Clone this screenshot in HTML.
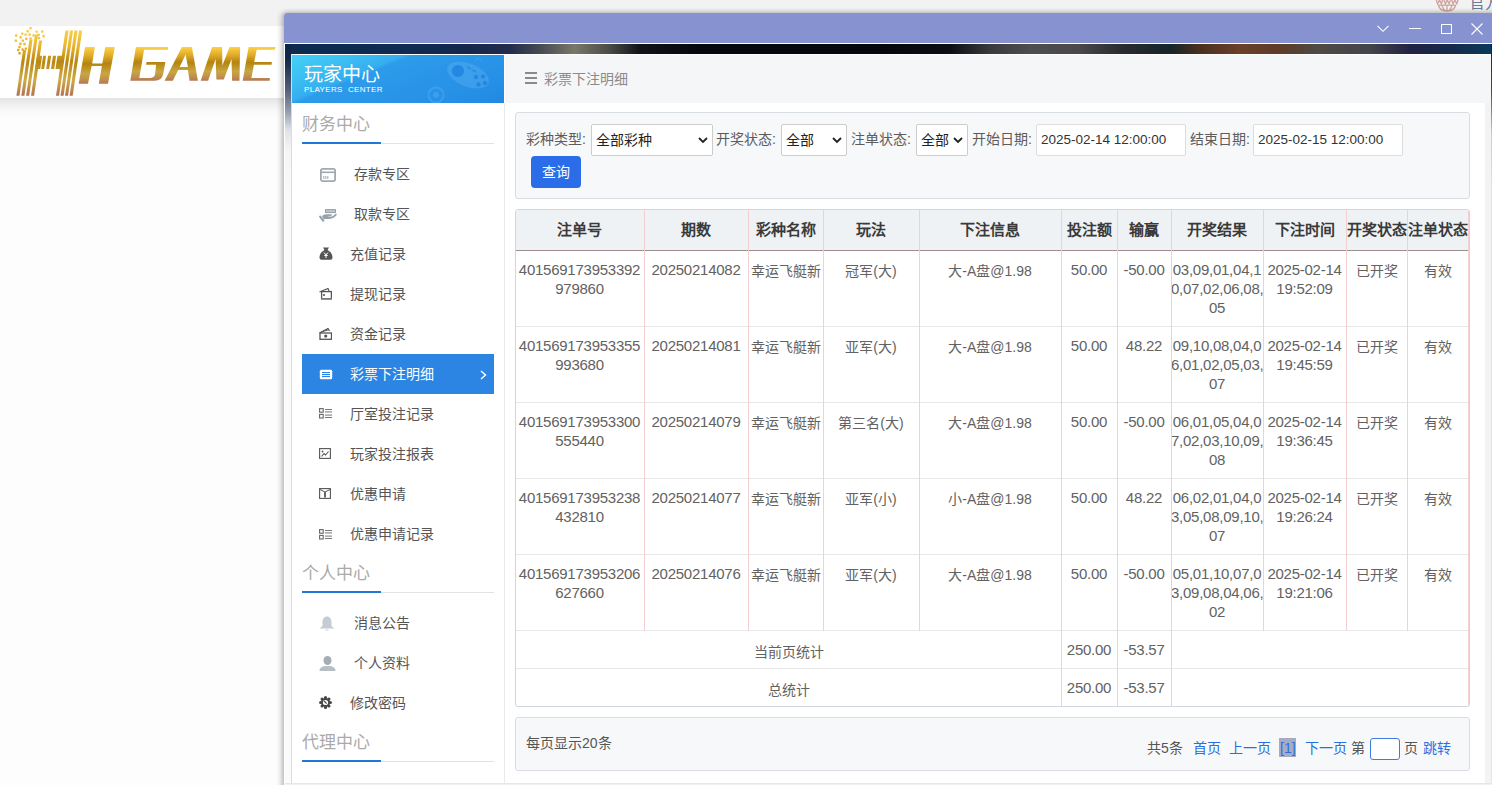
<!DOCTYPE html><html lang="zh-CN"><head><meta charset="utf-8"><style>
*{margin:0;padding:0;box-sizing:border-box}
html,body{width:1492px;height:785px;overflow:hidden}
body{font-family:"Liberation Sans",sans-serif;background:#fdfdfd;position:relative;color:#555}
.a{position:absolute}
.nw{white-space:nowrap}
#topbar{left:0;top:0;width:1492px;height:26px;background:#f2f2f2}
#hdr{left:0;top:26px;width:1492px;height:72px;background:#fff}
#hsh{left:0;top:98px;width:1492px;height:22px;background:linear-gradient(180deg,#e3e3e3 0px,#ededed 5px,#f6f6f6 11px,#fbfbfb 16px,#fdfdfd 22px)}
#win{left:284px;top:13px;width:1220px;height:790px;box-shadow:-3px 0 5px rgba(0,0,0,.21),0 -2px 4px rgba(0,0,0,.11);border-top-left-radius:3px;background:#fff}
#title{left:0;top:0;width:1220px;height:30px;background:#8792d0;border-top-left-radius:3px}
#strip{left:1px;top:31px;width:1207px;height:10px;background:linear-gradient(90deg,#0b2a4e 0.0%,#0e2c52 9.5%,#14284c 15.3%,#242c4c 18.6%,#464a52 21.1%,#7a7868 24.0%,#4a4a48 26.9%,#101418 29.4%,#05080d 34.4%,#05070c 49.6%,#0c0e14 55.1%,#3a3a3c 58.4%,#4e4e4e 61.7%,#4a4848 65.9%,#2a2c30 69.2%,#152528 73.3%,#4a3020 75.8%,#6a4028 79.1%,#5e3c28 82.4%,#4e4a44 85.7%,#44444a 89.9%,#222244 93.2%,#162a4a 96.5%,#0a3a5a 100.0%)}
#lstrip{left:1px;top:31px;width:6px;height:740px;background:linear-gradient(180deg,#0d2340 0px,#13284a 16px,#55607a 46px,#8e98aa 66px,#dfe2e8 86px,#f4f5f6 106px,#fafafa 160px,#fbfbfb 740px)}
#side{left:7px;top:41px;width:213px;height:729px;background:#fff;border-left:1px solid #dcdcdc}
#shead{left:0px;top:1px;width:212px;height:48px;background:linear-gradient(158deg,#44d0f6 0%,#3cbef2 20%,#34aef0 34%,#2c9ce9 37%,#2a96e8 55%,#2690e6 80%,#2188e2 100%);overflow:hidden}
.sec{left:11px;width:192px;height:40px}
.sec .t{position:absolute;left:0;top:0;font-size:17px;color:#aaa;line-height:20px}
.sec .ul{position:absolute;left:0;top:0;width:192px;height:1px;background:#e4e4e4}
.sec .ub{position:absolute;left:0;width:79px;height:2px;background:#1f78d8}
.mi{left:10px;width:192px;height:40px;font-size:14px;color:#555;line-height:40px}
.mi.act{background:#2c85e3;color:#fff}
.mi svg{position:absolute}
.mi .tx{position:absolute;top:0}
#main{left:220px;top:41px;width:1000px;height:729px;background:#fff}
#crumb{left:1px;top:1px;width:986px;height:48px;background:#f5f6f8}
#vline{left:0;top:49px;width:1px;height:680px;background:#e6ebf0}
#rgray{left:981px;top:49px;width:6px;height:680px;background:#f3f3f3}
#redge{left:1207px;top:31px;width:2px;height:760px;background:linear-gradient(180deg,#0b2444 0px,#3e4a66 47px,#c8ccd4 90px,#e0e0e0 140px,#e6e6e6 760px)}
#wbot{left:1px;top:770px;width:1219px;height:30px;background:#f0f0f0;border-top:1px solid #e6e6e6}
.box{border:1px solid #d9dde3;border-radius:3px;background:#f7f8fa}
.lbl{font-size:14px;color:#5c5c5c;line-height:16px}
.sel{background:#fff;border:1px solid #ccc;border-radius:2px;font-size:14px;color:#222;line-height:18px}
.inp{background:#fff;border:1px solid #ddd;border-radius:2px;font-size:13.5px;color:#333;line-height:16px}
.btn{background:#2b6de8;border-radius:4px;color:#fff;font-size:14px;line-height:18px;text-align:center}
#tbl{left:515px;top:209px;width:955px;height:498px;border:1px solid #cfd6dd;border-radius:3px;background:#fff;overflow:hidden}
.th{position:absolute;top:0;height:40px;background:#eff2f5;font-weight:bold;font-size:15px;color:#3a3a3a;text-align:center;line-height:40px}
.vl{position:absolute;width:1px;background:#f4cfd2}
.hl{position:absolute;height:1px;background:#e8e8e8}
.td{position:absolute;font-size:14px;color:#626262;text-align:center;line-height:19px;word-break:break-all}
.num{font-size:15px;letter-spacing:-0.25px}
.pg{font-size:14px;line-height:18px;color:#555}
.lk{color:#2a6fe0}
</style></head><body><div id="topbar" class="a"></div>
<div id="hdr" class="a"></div><div id="hsh" class="a"></div>
<svg class="a" style="left:0;top:26px" width="284" height="72" viewBox="0 26 284 72">
<defs>
<linearGradient id="g2" x1="0" y1="30" x2="0" y2="96" gradientUnits="userSpaceOnUse">
<stop offset="0" stop-color="#fbd045"/><stop offset="0.25" stop-color="#e8b430"/><stop offset="0.48" stop-color="#b8870f"/><stop offset="0.75" stop-color="#cfab48"/><stop offset="0.9" stop-color="#bf8a4c"/><stop offset="1" stop-color="#b27058"/></linearGradient>
<linearGradient id="g3" x1="0" y1="47" x2="0" y2="81" gradientUnits="userSpaceOnUse">
<stop offset="0" stop-color="#fdd244"/><stop offset="0.22" stop-color="#e2ae2c"/><stop offset="0.45" stop-color="#b5840d"/><stop offset="0.72" stop-color="#c8a644"/><stop offset="0.88" stop-color="#c08f4c"/><stop offset="1" stop-color="#b47554"/></linearGradient>
<linearGradient id="g4" x1="0" y1="47" x2="0" y2="84" gradientUnits="userSpaceOnUse">
<stop offset="0" stop-color="#fdd244"/><stop offset="0.22" stop-color="#e2ae2c"/><stop offset="0.45" stop-color="#b5840d"/><stop offset="0.72" stop-color="#c8a644"/><stop offset="0.88" stop-color="#c08f4c"/><stop offset="1" stop-color="#b47554"/></linearGradient>
</defs>
<g fill="url(#g2)">
<polygon points="16.40,95.7 19.50,95.7 26.13,50.00 23.03,50.00"/><polygon points="21.30,95.7 24.40,95.7 32.55,39.50 29.45,39.50"/><polygon points="26.10,95.7 29.20,95.7 38.07,34.50 34.97,34.50"/><polygon points="31.00,95.7 34.10,95.7 42.10,40.50 39.00,40.50"/><polygon points="56.00,95.7 59.10,95.7 68.54,30.60 65.44,30.60"/><polygon points="60.50,95.7 63.60,95.7 73.04,30.60 69.94,30.60"/><polygon points="65.00,95.7 68.10,95.7 77.54,30.60 74.44,30.60"/><polygon points="69.60,95.7 72.70,95.7 82.14,30.60 79.04,30.60"/><polygon points="35.20,69.1 40.20,69.1 42.13,55.8 37.13,55.8"/><polygon points="41.20,69.1 44.20,69.1 46.13,55.8 43.13,55.8"/><polygon points="46.20,69.1 49.20,69.1 51.13,55.8 48.13,55.8"/><polygon points="51.00,69.1 54.20,69.1 56.13,55.8 52.93,55.8"/><polygon points="55.50,69.1 61.00,69.1 62.93,55.8 57.43,55.8"/><rect x="29.4" y="27.0" width="2.4" height="2.4" rx="0.6"/><rect x="26.4" y="30.0" width="2.4" height="2.4" rx="0.6"/><rect x="35.4" y="30.4" width="2.4" height="2.4" rx="0.6"/><rect x="41.0" y="30.3" width="2.4" height="2.4" rx="0.6"/><rect x="21.1" y="32.4" width="2.4" height="2.4" rx="0.6"/><rect x="24.4" y="33.4" width="2.4" height="2.4" rx="0.6"/><rect x="28.4" y="33.3" width="2.4" height="2.4" rx="0.6"/><rect x="32.4" y="34.3" width="2.4" height="2.4" rx="0.6"/><rect x="37.4" y="33.6" width="2.4" height="2.4" rx="0.6"/><rect x="42.4" y="35.0" width="2.4" height="2.4" rx="0.6"/><rect x="15.0" y="34.3" width="2.4" height="2.4" rx="0.6"/><rect x="19.4" y="36.1" width="2.4" height="2.4" rx="0.6"/><rect x="25.1" y="37.6" width="2.4" height="2.4" rx="0.6"/><rect x="29.3" y="37.3" width="2.4" height="2.4" rx="0.6"/><rect x="37.8" y="36.8" width="2.4" height="2.4" rx="0.6"/><rect x="14.6" y="39.4" width="2.4" height="2.4" rx="0.6"/><rect x="21.6" y="39.4" width="2.4" height="2.4" rx="0.6"/><rect x="19.3" y="42.6" width="2.4" height="2.4" rx="0.6"/><rect x="23.3" y="42.8" width="2.4" height="2.4" rx="0.6"/><rect x="18.3" y="45.8" width="2.4" height="2.4" rx="0.6"/><rect x="21.4" y="48.3" width="2.4" height="2.4" rx="0.6"/><rect x="24.6" y="47.4" width="2.4" height="2.4" rx="0.6"/><rect x="17.0" y="48.8" width="2.4" height="2.4" rx="0.6"/><rect x="18.4" y="52.0" width="2.4" height="2.4" rx="0.6"/></g><g fill="url(#g4)"><polygon points="78.7,83.7 88.0,83.7 91.6,66 101.9,66 98.8,83.7 108,83.7 114.8,47 105.3,47 102.3,63.6 92.2,63.6 94.9,47 85.1,47"/></g><g fill="url(#g3)"><path d="M135.9,47 L168.2,47 L167.9,49.8 L144.1,49.8 L139.3,77.9 L150.5,77.9 Q154.6,77.9 155.2,73.5 L156.1,64.7 L146,64.7 L146.6,61.9 L165.4,61.9 L163.3,73.5 Q162.2,80.7 154.4,80.7 L130.3,80.7 Z"/><path d="M164.6,80.7 L181.9,47 L191.9,47 L197.9,80.7 L189.6,80.7 L187.9,69.9 L178.2,69.9 L172.8,80.7 Z M185.6,54.5 L179.7,67.1 L187.9,67.1 Z" fill-rule="evenodd"/><polygon points="200.7,80.7 212.1,47 222.1,47 222.4,65.4 229.5,47 240.1,47 239.5,80.7 232.1,80.7 231.5,59.1 223.8,79.6 216.4,79.6 215.6,59.1 208.1,80.7"/><polygon points="248.6,47 275.5,47 274.7,49.8 256.7,49.8 254.2,61.9 271.9,61.9 271.6,64.7 253.9,64.7 251.4,77.9 269.9,77.9 269.6,80.7 242.7,80.7"/></g></svg>
<svg class="a" style="left:1430px;top:0" width="34" height="13" viewBox="1430 0 34 13"><g fill="none" stroke="#cfa29e" stroke-width="1.3"><path d="M1435.6,-2 L1437.6,3.8 L1439.5,0 L1441.4,3.8 L1443.3,-2"/><path d="M1443.3,-2 L1445.3,3.8 L1447.2,0 L1449.1,3.8 L1451,-2"/><path d="M1451,-2 L1453,3.8 L1454.9,0 L1456.8,3.8 L1458.6,-2"/><path d="M1438,5.2 H1456"/><path d="M1438.3,5.2 Q1440,11 1447,11 Q1454,11 1455.7,5.2"/><path d="M1447,5.2 V11"/><path d="M1442,5.2 Q1443,9 1445,10.8"/><path d="M1452,5.2 Q1451,9 1449,10.8"/></g></svg>
<div class="a nw" style="left:1469px;top:-6px;font-size:16px;color:#6b7a99;line-height:18px">官方</div>
<div id="win" class="a"><div id="title" class="a"></div><svg class="a" style="left:1093px;top:12px" width="12" height="8"><path d="M0.5 0.8 L6 6.3 L11.5 0.8" fill="none" stroke="#fff" stroke-width="1.1"/></svg><div class="a" style="left:1125px;top:15px;width:12px;height:1px;background:#fff"></div><div class="a" style="left:1157px;top:11px;width:11px;height:10px;border:1px solid #fff"></div><svg class="a" style="left:1187px;top:10px" width="12" height="12"><path d="M0.5 0.5 L11.5 11.5 M11.5 0.5 L0.5 11.5" fill="none" stroke="#fff" stroke-width="1.1"/></svg><div id="strip" class="a"></div><div id="lstrip" class="a"></div><div id="side" class="a"><div id="shead" class="a"><svg class="a" style="left:0;top:0" width="212" height="48"><g opacity="0.55"><ellipse cx="176" cy="20" rx="22" ry="11.5" transform="rotate(22 176 20)" fill="#4eaaf0"/><circle cx="144" cy="40" r="7.5" fill="none" stroke="#4eaaf0" stroke-width="2"/><circle cx="144" cy="40" r="3" fill="#4eaaf0"/><path d="M182 7 L186 3 L190 6" fill="none" stroke="#4eaaf0" stroke-width="1"/></g><g fill="#1f82e0" opacity="0.8"><circle cx="166" cy="16" r="6"/><circle cx="184" cy="22" r="2.2"/><circle cx="191" cy="21.5" r="2.2"/><circle cx="186.5" cy="29.5" r="2.2"/><circle cx="193" cy="28" r="2.2"/><rect x="175" y="12" width="4" height="1.6" transform="rotate(30 177 13)"/><rect x="180" y="15" width="4" height="1.6" transform="rotate(30 182 16)"/></g></svg><div class="a nw" style="left:12px;top:9px;font-size:19px;line-height:22px;color:#fff">玩家中心</div><div class="a nw" style="left:12px;top:30px;font-size:8px;line-height:10px;color:#fff;letter-spacing:.35px">PLAYERS &nbsp;CENTER</div></div><div class="a nw" style="left:10px;top:61px;font-size:17px;line-height:20px;color:#aaa">财务中心</div><div class="a" style="left:10px;top:89px;width:192px;height:1px;background:#e3e3e3"></div><div class="a" style="left:10px;top:88px;width:79px;height:2px;background:#1f78d8"></div><div class="a nw" style="left:10px;top:510px;font-size:17px;line-height:20px;color:#aaa">个人中心</div><div class="a" style="left:10px;top:538px;width:192px;height:1px;background:#e3e3e3"></div><div class="a" style="left:10px;top:537px;width:79px;height:2px;background:#1f78d8"></div><div class="a nw" style="left:10px;top:679px;font-size:17px;line-height:20px;color:#aaa">代理中心</div><div class="a" style="left:10px;top:707px;width:192px;height:1px;background:#e3e3e3"></div><div class="a" style="left:10px;top:706px;width:79px;height:2px;background:#1f78d8"></div><div class="a mi" style="top:100px"><div class="a" style="left:18px;top:14px;line-height:0"><svg width="16" height="14" viewBox="0 0 16 14"><rect x="0.9" y="0.9" width="14.2" height="12.2" rx="1.8" fill="none" stroke="#a0a9b2" stroke-width="1.8"/><rect x="1" y="3.5" width="14" height="1.6" fill="#a0a9b2"/><rect x="3.3" y="8" width="1" height="3" fill="#a0a9b2"/><rect x="5.3" y="8" width="1" height="3" fill="#a0a9b2"/><rect x="7.3" y="8" width="1" height="3" fill="#a0a9b2"/></svg></div><div class="tx nw" style="left:52px">存款专区</div></div><div class="a mi" style="top:140px"><div class="a" style="left:17px;top:15px;line-height:0"><svg width="19" height="13" viewBox="0 0 19 13"><rect x="6.5" y="0.6" width="10" height="3" fill="#bcc3ca" stroke="#98a2ac" stroke-width="1"/><path d="M3,7 Q4.5,5.2 7,5.2 L12.3,5.2 Q13.6,5.6 12.6,6.7 L8.6,7.2 Q10.5,7.9 13,7.4 L17.2,4.6 Q18.3,5.2 17.4,6.4 Q14.8,9.6 10.5,9.9 L6.2,9.9 L4.8,10.6 Z" fill="#98a2ac"/><path d="M1.2,7.6 L4.2,11.6" stroke="#98a2ac" stroke-width="2.2" stroke-linecap="round"/></svg></div><div class="tx nw" style="left:52px">取款专区</div></div><div class="a mi" style="top:180px"><div class="a" style="left:17px;top:13px;line-height:0"><svg width="14" height="13" viewBox="0 0 14 13"><path d="M4 0.5 L10 0.5 L8.5 3 C12 4.5 13.5 8 13.5 10.5 C13.5 12 12.5 12.8 11 12.8 L3 12.8 C1.5 12.8 0.5 12 0.5 10.5 C0.5 8 2 4.5 5.5 3 Z" fill="#555"/><path d="M5 5.5 L7 8 L9 5.5 M7 8 V11 M5.3 8.5 H8.7" stroke="#fff" stroke-width="1" fill="none"/></svg></div><div class="tx nw" style="left:48px">充值记录</div></div><div class="a mi" style="top:220px"><div class="a" style="left:17px;top:14px;line-height:0"><svg width="13" height="12" viewBox="0 0 13 12"><path d="M0.5 4 L9 0.5 L10 3" fill="none" stroke="#555" stroke-width="1.2"/><rect x="2.6" y="3.6" width="9.8" height="7.2" fill="#fff" stroke="#555" stroke-width="1.3"/><rect x="2" y="10" width="11" height="1.5" fill="#777"/><rect x="4" y="6" width="2" height="2" fill="#777"/></svg></div><div class="tx nw" style="left:48px">提现记录</div></div><div class="a mi" style="top:260px"><div class="a" style="left:17px;top:14px;line-height:0"><svg width="13" height="12" viewBox="0 0 13 12"><path d="M0.5 5 L9 0.5 L10.5 3" fill="none" stroke="#555" stroke-width="1.2"/><path d="M2 4 L9.5 1.8" stroke="#555" stroke-width="1"/><rect x="1" y="5" width="11.5" height="6.3" fill="#fff" stroke="#555" stroke-width="1.3"/><circle cx="6.7" cy="8.1" r="1.6" fill="#555"/></svg></div><div class="tx nw" style="left:48px">资金记录</div></div><div class="a mi act" style="top:300px"><div class="a" style="left:17px;top:15px;line-height:0"><svg width="14" height="11" viewBox="0 0 14 11"><rect x="0.8" y="0.8" width="12.4" height="9.4" rx="1.5" fill="#fff"/><rect x="3" y="3" width="8" height="1.1" fill="#2c85e3"/><rect x="3" y="5" width="8" height="1.1" fill="#2c85e3"/><rect x="3" y="7" width="8" height="1.1" fill="#2c85e3"/></svg></div><div class="tx nw" style="left:48px">彩票下注明细</div><svg class="a" style="left:178px;top:16px" width="7" height="10"><path d="M1 1 L5.5 5 L1 9" fill="none" stroke="#fff" stroke-width="1.4"/></svg></div><div class="a mi" style="top:340px"><div class="a" style="left:17px;top:14px;line-height:0"><svg width="13" height="11" viewBox="0 0 13 11"><rect x="0.6" y="0.6" width="3.6" height="3.6" fill="none" stroke="#666" stroke-width="1.1"/><rect x="0.6" y="6.4" width="3.6" height="3.6" fill="none" stroke="#666" stroke-width="1.1"/><rect x="6" y="1" width="7" height="1" fill="#777"/><rect x="6" y="3.4" width="7" height="1" fill="#777"/><rect x="6" y="6.6" width="7" height="1" fill="#777"/><rect x="6" y="9" width="7" height="1" fill="#777"/></svg></div><div class="tx nw" style="left:48px">厅室投注记录</div></div><div class="a mi" style="top:380px"><div class="a" style="left:17px;top:14px;line-height:0"><svg width="12" height="11" viewBox="0 0 12 11"><rect x="0.6" y="0.6" width="10.8" height="9.8" fill="none" stroke="#555" stroke-width="1.1"/><path d="M2.5 8.5 L5 5.5 L6.5 7 L9.5 3.5" fill="none" stroke="#555" stroke-width="1.1"/><circle cx="3.5" cy="3.5" r="0.9" fill="#555"/></svg></div><div class="tx nw" style="left:48px">玩家投注报表</div></div><div class="a mi" style="top:420px"><div class="a" style="left:17px;top:14px;line-height:0"><svg width="12" height="11" viewBox="0 0 12 11"><rect x="0.6" y="0.6" width="10.8" height="9.8" fill="none" stroke="#555" stroke-width="1.1"/><path d="M1 1.5 L6 4 L11 1.5" fill="none" stroke="#555" stroke-width="1"/><path d="M6 4 V9.5" stroke="#666" stroke-width="2"/></svg></div><div class="tx nw" style="left:48px">优惠申请</div></div><div class="a mi" style="top:460px"><div class="a" style="left:17px;top:15px;line-height:0"><svg width="13" height="11" viewBox="0 0 13 11"><rect x="0.6" y="0.6" width="3.6" height="3.6" fill="none" stroke="#666" stroke-width="1.1"/><rect x="0.6" y="6.4" width="3.6" height="3.6" fill="none" stroke="#666" stroke-width="1.1"/><rect x="6" y="1" width="7" height="1" fill="#777"/><rect x="6" y="3.4" width="7" height="1" fill="#777"/><rect x="6" y="6.6" width="7" height="1" fill="#777"/><rect x="6" y="9" width="7" height="1" fill="#777"/></svg></div><div class="tx nw" style="left:48px">优惠申请记录</div></div><div class="a mi" style="top:549px"><div class="a" style="left:17px;top:13px;line-height:0"><svg width="16" height="15" viewBox="0 0 16 15"><path d="M8 0.5 C11 0.5 12.5 3 12.5 6 L12.5 10 L15.5 12.5 L0.5 12.5 L3.5 10 L3.5 6 C3.5 3 5 0.5 8 0.5 Z" fill="#c6ccd3"/><rect x="6.8" y="13.5" width="2.4" height="1" fill="#c6ccd3"/></svg></div><div class="tx nw" style="left:52px">消息公告</div></div><div class="a mi" style="top:589px"><div class="a" style="left:17px;top:13px;line-height:0"><svg width="17" height="15" viewBox="0 0 17 15"><ellipse cx="8.5" cy="4.5" rx="4" ry="4.5" fill="#a3adb6"/><path d="M0.5 15 C0.5 12 3 10.5 6 10 L11 10 C14 10.5 16.5 12 16.5 15 Z" fill="#b6bec6"/></svg></div><div class="tx nw" style="left:52px">个人资料</div></div><div class="a mi" style="top:629px"><div class="a" style="left:17px;top:13px;line-height:0"><svg width="13" height="13" viewBox="0 0 13 13"><g fill="#474747"><circle cx="6.50" cy="1.60" r="1.55"/><circle cx="9.96" cy="3.04" r="1.55"/><circle cx="11.40" cy="6.50" r="1.55"/><circle cx="9.96" cy="9.96" r="1.55"/><circle cx="6.50" cy="11.40" r="1.55"/><circle cx="3.04" cy="9.96" r="1.55"/><circle cx="1.60" cy="6.50" r="1.55"/><circle cx="3.04" cy="3.04" r="1.55"/><circle cx="6.5" cy="6.5" r="4.6"/></g><circle cx="6.5" cy="6.5" r="2.6" fill="#fff"/><path d="M5.2,5 L7.6,7.6" stroke="#474747" stroke-width="1.2"/></svg></div><div class="tx nw" style="left:48px">修改密码</div></div></div><div id="main" class="a"><div id="crumb" class="a"></div><div id="vline" class="a"></div><div id="rgray" class="a"></div><div class="a" style="left:21px;top:18px;width:12px;height:2px;background:#8a8a8a"></div><div class="a" style="left:21px;top:23px;width:12px;height:2px;background:#8a8a8a"></div><div class="a" style="left:21px;top:28px;width:12px;height:2px;background:#8a8a8a"></div><div class="a nw" style="left:40px;top:16px;font-size:14px;line-height:18px;color:#8a8a8a">彩票下注明细</div><div class="a box" style="left:11px;top:58px;width:955px;height:87px"></div><div class="a lbl nw" style="left:22px;top:77px">彩种类型:</div><div class="a sel nw" style="left:87px;top:70px;width:122px;height:32px;padding:6px 0 0 4px">全部彩种<svg class="a" style="left:106px;top:12px" width="10" height="7"><path d="M1 1 L5 5 L9 1" fill="none" stroke="#222" stroke-width="1.8"/></svg></div><div class="a lbl nw" style="left:212px;top:77px">开奖状态:</div><div class="a sel nw" style="left:277px;top:70px;width:66px;height:32px;padding:6px 0 0 4px">全部<svg class="a" style="left:50px;top:12px" width="10" height="7"><path d="M1 1 L5 5 L9 1" fill="none" stroke="#222" stroke-width="1.8"/></svg></div><div class="a lbl nw" style="left:347px;top:77px">注单状态:</div><div class="a sel nw" style="left:412px;top:70px;width:52px;height:32px;padding:6px 0 0 4px">全部<svg class="a" style="left:36px;top:12px" width="10" height="7"><path d="M1 1 L5 5 L9 1" fill="none" stroke="#222" stroke-width="1.8"/></svg></div><div class="a lbl nw" style="left:468px;top:77px">开始日期:</div><div class="a inp nw" style="left:532px;top:70px;width:150px;height:32px;padding:7px 0 0 4px">2025-02-14 12:00:00</div><div class="a lbl nw" style="left:686px;top:77px">结束日期:</div><div class="a inp nw" style="left:749px;top:70px;width:150px;height:32px;padding:7px 0 0 4px">2025-02-15 12:00:00</div><div class="a btn nw" style="left:27px;top:102px;width:50px;height:32px;padding-top:7px">查询</div></div><div id="redge" class="a"></div><div id="wbot" class="a"></div></div>
<div id="tbl" class="a"><div class="th nw" style="left:-1px;width:129px">注单号</div><div class="th nw" style="left:128px;width:104px">期数</div><div class="th nw" style="left:232px;width:75px">彩种名称</div><div class="th nw" style="left:307px;width:96px">玩法</div><div class="th nw" style="left:403px;width:142px">下注信息</div><div class="th nw" style="left:545px;width:56px">投注额</div><div class="th nw" style="left:601px;width:54px">输赢</div><div class="th nw" style="left:655px;width:92px">开奖结果</div><div class="th nw" style="left:747px;width:83px">下注时间</div><div class="th nw" style="left:830px;width:61px">开奖状态</div><div class="th nw" style="left:891px;width:62px">注单状态</div><div class="a" style="left:0;top:40px;width:955px;height:1px;background:#9c8e8e"></div><div class="td nw num" style="left:-1px;width:129px;top:50px">401569173953392<br>979860</div><div class="td nw num" style="left:128px;width:104px;top:50px">20250214082</div><div class="td nw" style="left:232px;width:75px;top:52px">幸运飞艇新</div><div class="td nw" style="left:307px;width:96px;top:52px">冠军(大)</div><div class="td nw" style="left:403px;width:142px;top:52px">大-A盘@1.98</div><div class="td nw num" style="left:545px;width:56px;top:50px">50.00</div><div class="td nw num" style="left:601px;width:54px;top:50px">-50.00</div><div class="td nw num" style="left:655px;width:92px;top:50px">03,09,01,04,1<br>0,07,02,06,08,<br>05</div><div class="td nw num" style="left:747px;width:83px;top:50px">2025-02-14<br>19:52:09</div><div class="td nw" style="left:830px;width:61px;top:52px">已开奖</div><div class="td nw" style="left:891px;width:62px;top:52px">有效</div><div class="hl" style="left:0;top:116px;width:955px"></div><div class="td nw num" style="left:-1px;width:129px;top:126px">401569173953355<br>993680</div><div class="td nw num" style="left:128px;width:104px;top:126px">20250214081</div><div class="td nw" style="left:232px;width:75px;top:128px">幸运飞艇新</div><div class="td nw" style="left:307px;width:96px;top:128px">亚军(大)</div><div class="td nw" style="left:403px;width:142px;top:128px">大-A盘@1.98</div><div class="td nw num" style="left:545px;width:56px;top:126px">50.00</div><div class="td nw num" style="left:601px;width:54px;top:126px">48.22</div><div class="td nw num" style="left:655px;width:92px;top:126px">09,10,08,04,0<br>6,01,02,05,03,<br>07</div><div class="td nw num" style="left:747px;width:83px;top:126px">2025-02-14<br>19:45:59</div><div class="td nw" style="left:830px;width:61px;top:128px">已开奖</div><div class="td nw" style="left:891px;width:62px;top:128px">有效</div><div class="hl" style="left:0;top:192px;width:955px"></div><div class="td nw num" style="left:-1px;width:129px;top:202px">401569173953300<br>555440</div><div class="td nw num" style="left:128px;width:104px;top:202px">20250214079</div><div class="td nw" style="left:232px;width:75px;top:204px">幸运飞艇新</div><div class="td nw" style="left:307px;width:96px;top:204px">第三名(大)</div><div class="td nw" style="left:403px;width:142px;top:204px">大-A盘@1.98</div><div class="td nw num" style="left:545px;width:56px;top:202px">50.00</div><div class="td nw num" style="left:601px;width:54px;top:202px">-50.00</div><div class="td nw num" style="left:655px;width:92px;top:202px">06,01,05,04,0<br>7,02,03,10,09,<br>08</div><div class="td nw num" style="left:747px;width:83px;top:202px">2025-02-14<br>19:36:45</div><div class="td nw" style="left:830px;width:61px;top:204px">已开奖</div><div class="td nw" style="left:891px;width:62px;top:204px">有效</div><div class="hl" style="left:0;top:268px;width:955px"></div><div class="td nw num" style="left:-1px;width:129px;top:278px">401569173953238<br>432810</div><div class="td nw num" style="left:128px;width:104px;top:278px">20250214077</div><div class="td nw" style="left:232px;width:75px;top:280px">幸运飞艇新</div><div class="td nw" style="left:307px;width:96px;top:280px">亚军(小)</div><div class="td nw" style="left:403px;width:142px;top:280px">小-A盘@1.98</div><div class="td nw num" style="left:545px;width:56px;top:278px">50.00</div><div class="td nw num" style="left:601px;width:54px;top:278px">48.22</div><div class="td nw num" style="left:655px;width:92px;top:278px">06,02,01,04,0<br>3,05,08,09,10,<br>07</div><div class="td nw num" style="left:747px;width:83px;top:278px">2025-02-14<br>19:26:24</div><div class="td nw" style="left:830px;width:61px;top:280px">已开奖</div><div class="td nw" style="left:891px;width:62px;top:280px">有效</div><div class="hl" style="left:0;top:344px;width:955px"></div><div class="td nw num" style="left:-1px;width:129px;top:354px">401569173953206<br>627660</div><div class="td nw num" style="left:128px;width:104px;top:354px">20250214076</div><div class="td nw" style="left:232px;width:75px;top:356px">幸运飞艇新</div><div class="td nw" style="left:307px;width:96px;top:356px">亚军(大)</div><div class="td nw" style="left:403px;width:142px;top:356px">大-A盘@1.98</div><div class="td nw num" style="left:545px;width:56px;top:354px">50.00</div><div class="td nw num" style="left:601px;width:54px;top:354px">-50.00</div><div class="td nw num" style="left:655px;width:92px;top:354px">05,01,10,07,0<br>3,09,08,04,06,<br>02</div><div class="td nw num" style="left:747px;width:83px;top:354px">2025-02-14<br>19:21:06</div><div class="td nw" style="left:830px;width:61px;top:356px">已开奖</div><div class="td nw" style="left:891px;width:62px;top:356px">有效</div><div class="hl" style="left:0;top:420px;width:955px"></div><div class="td nw" style="left:0;width:545px;top:433px">当前页统计</div><div class="td nw num" style="left:545px;width:56px;top:430px">250.00</div><div class="td nw num" style="left:601px;width:54px;top:430px">-53.57</div><div class="hl" style="left:0;top:458px;width:955px"></div><div class="td nw" style="left:0;width:545px;top:471px">总统计</div><div class="td nw num" style="left:545px;width:56px;top:468px">250.00</div><div class="td nw num" style="left:601px;width:54px;top:468px">-53.57</div><div class="vl" style="left:128px;top:0;height:421px"></div><div class="vl" style="left:232px;top:0;height:421px"></div><div class="vl" style="left:307px;top:0;height:421px"></div><div class="vl" style="left:403px;top:0;height:421px"></div><div class="vl" style="left:545px;top:0;height:421px"></div><div class="vl" style="left:601px;top:0;height:421px"></div><div class="vl" style="left:655px;top:0;height:421px"></div><div class="vl" style="left:747px;top:0;height:421px"></div><div class="vl" style="left:830px;top:0;height:421px"></div><div class="vl" style="left:891px;top:0;height:421px"></div><div class="vl" style="left:545px;top:421px;height:76px"></div><div class="vl" style="left:601px;top:421px;height:76px"></div><div class="vl" style="left:655px;top:421px;height:76px"></div><div class="vl" style="left:952px;top:0;height:500px"></div></div>
<div class="a box" style="left:515px;top:717px;width:955px;height:54px"></div>
<div class="a pg nw" style="left:526px;top:734px">每页显示20条</div>
<div class="a pg nw " style="left:1147px;top:739px">共5条</div>
<div class="a pg nw lk" style="left:1193px;top:739px">首页</div>
<div class="a pg nw lk" style="left:1229px;top:739px">上一页</div>
<div class="a pg nw lk" style="left:1305px;top:739px">下一页</div>
<div class="a pg nw " style="left:1351px;top:739px">第</div>
<div class="a pg nw " style="left:1404px;top:739px">页</div>
<div class="a pg nw lk" style="left:1423px;top:739px">跳转</div>
<div class="a" style="left:1279px;top:738px;width:17px;height:19px;background:#a9abc4"></div>
<div class="a pg nw lk" style="left:1280px;top:739px">[1]</div>
<div class="a" style="left:1370px;top:738px;width:30px;height:22px;border:1px solid #3b7be2;border-radius:3px;background:#fff"></div></body></html>
